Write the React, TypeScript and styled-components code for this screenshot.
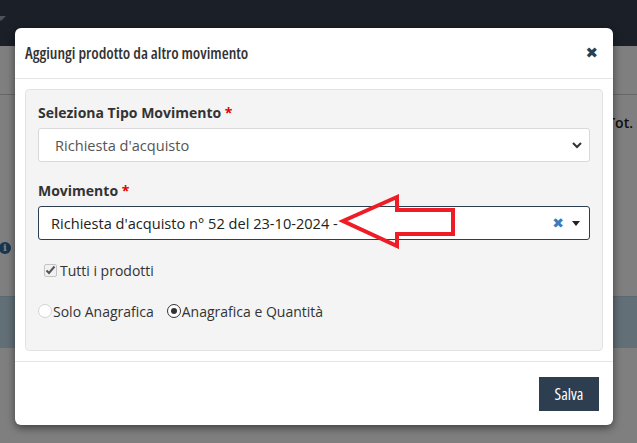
import React from "react";
import styled, { createGlobalStyle } from "styled-components";

const Global = createGlobalStyle`
  html, body { margin: 0; padding: 0; }
  body { width: 637px; height: 443px; overflow: hidden; font-family: "Open Sans", "Noto Sans", sans-serif; }
  * { box-sizing: border-box; }
`;

const Page = styled.div`
  position: relative;
  width: 637px;
  height: 443px;
  background: #ffffff;
  overflow: hidden;
`;

const NavBar = styled.div`
  height: 46px;
  background: #343f50;
  display: flex;
  align-items: flex-start;
  padding-top: 16px;
`;

const NavCaret = styled.span`
  display: block;
  width: 0;
  height: 0;
  margin-left: -4px;
  border-left: 5px solid transparent;
  border-right: 5px solid transparent;
  border-top: 5px solid #9aa3ad;
`;

const PageHeaderRow = styled.div`
  height: 49px;
  border-bottom: 1px solid #cfcfcf;
`;

const PageContent = styled.div`
  display: flex;
  flex-direction: column;
`;

const TotRow = styled.div`
  height: 54px;
  display: flex;
  justify-content: flex-end;
  align-items: center;
  font-size: 14px;
  font-weight: 600;
  color: #222;
  padding-right: 4px;
`;

const InfoRow = styled.div`
  height: 147px;
  display: flex;
  align-items: flex-end;
  padding-bottom: 42px;
`;

const InfoIcon = styled.span`
  width: 12px;
  height: 12px;
  margin-left: -1px;
  border-radius: 50%;
  background: #2d6da3;
  color: #fff;
  font-family: "DejaVu Serif", serif;
  font-weight: 700;
  font-size: 10px;
  line-height: 12px;
  text-align: center;
`;

const InfoBand = styled.div`
  height: 52px;
  background: #c4dfec;
  border-top: 1px solid #b5d3e2;
`;

const Backdrop = styled.div`
  position: absolute;
  inset: 0;
  background: rgba(0, 0, 0, 0.5);
`;

const Modal = styled.div`
  position: absolute;
  left: 15px;
  top: 28px;
  width: 598px;
  height: 397px;
  background: #ffffff;
  border-radius: 6px;
  box-shadow: 0 3px 9px rgba(0, 0, 0, 0.5);
  display: flex;
  flex-direction: column;
`;

const ModalHeader = styled.div`
  height: 51px;
  border-bottom: 1px solid #e5e5e5;
  display: flex;
  align-items: center;
  justify-content: space-between;
  padding: 0 15px 0 10px;
`;

const Title = styled.h4`
  margin: 0;
  font-family: "Open Sans", sans-serif;
  font-size: 16px;
  font-weight: 600;
  font-stretch: 79%;
  color: #333;
`;

const Close = styled.span`
  font-family: "DejaVu Sans", sans-serif;
  font-size: 15px;
  font-weight: 700;
  color: #2c3e50;
  line-height: 1;
`;

const ModalBody = styled.div`
  padding: 10px;
  flex: 0 0 auto;
  border-bottom: 1px solid #e5e5e5;
`;

const Well = styled.div`
  height: 262px;
  background: #f4f4f4;
  border: 1px solid #e3e3e3;
  border-radius: 4px;
  padding: 12px 12px 0 12px;
  display: flex;
  flex-direction: column;
`;

const Label = styled.label`
  display: block;
  height: 21px;
  font-size: 14px;
  font-weight: 700;
  color: #333;
  line-height: 21px;
  margin-bottom: 5px;
`;

const Req = styled.span`
  color: #e60000;
`;

const Select = styled.div`
  height: 34px;
  background: #fff;
  border: 1px solid #d9d9d9;
  border-radius: 3px;
  display: flex;
  align-items: center;
  justify-content: space-between;
  padding: 0 6px 0 16px;
  font-size: 14.6px;
  color: #555;
  margin-bottom: 18px;
`;

const Select2 = styled.div`
  height: 34px;
  background: #fff;
  border: 1px solid #2c3e50;
  border-radius: 3px;
  display: flex;
  align-items: center;
  padding: 0 9px 0 12px;
  font-size: 14.6px;
  color: #222;
  margin-bottom: 19px;
`;

const Select2Text = styled.span`
  flex: 1;
`;

const ClearX = styled.span`
  font-family: "DejaVu Sans", sans-serif;
  font-weight: 700;
  font-size: 14px;
  color: #3a7cc2;
  margin-right: 8px;
`;

const Caret = styled.span`
  width: 0;
  height: 0;
  border-left: 4px solid transparent;
  border-right: 4px solid transparent;
  border-top: 5px solid #222;
`;

const CheckRow = styled.div`
  display: flex;
  align-items: center;
  height: 22px;
  padding-left: 6px;
  font-size: 14px;
  color: #333;
  margin-bottom: 19px;
`;

const CheckBox = styled.span`
  width: 13px;
  height: 13px;
  border: 1px solid #c4c4c4;
  border-radius: 2px;
  background: #f1f1f1;
  display: inline-flex;
  align-items: center;
  justify-content: center;
  margin-right: 3px;
`;

const RadioRow = styled.div`
  display: flex;
  align-items: center;
  height: 22px;
  font-size: 14px;
  color: #333;
`;

const RadioItem = styled.span`
  display: inline-flex;
  align-items: center;
  margin-right: 13px;
`;

const Radio = styled.span<{ $checked?: boolean }>`
  width: 14px;
  height: 14px;
  border-radius: 50%;
  border: 1px solid ${(p) => (p.$checked ? "#333" : "#d4d4d4")};
  background: #fff;
  display: inline-flex;
  align-items: center;
  justify-content: center;
  margin-right: 1px;
  &::after {
    content: "";
    width: 6px;
    height: 6px;
    border-radius: 50%;
    background: ${(p) => (p.$checked ? "#333" : "transparent")};
  }
`;

const Footer = styled.div`
  flex: 1;
  display: flex;
  justify-content: flex-end;
  align-items: flex-start;
  padding: 15px 14px 0 0;
`;

const Button = styled.button`
  height: 34px;
  min-width: 60px;
  padding: 0 13px;
  background: #2c3e50;
  color: #fff;
  border: none;
  border-radius: 0;
  font-family: "Open Sans", sans-serif;
  font-size: 16px;
  font-weight: 400;
  font-stretch: 82%;
`;

const ArrowSvg = styled.svg`
  position: absolute;
  left: 327px;
  top: 169px;
`;

export default function App() {
  return (
    <Page>
      <Global />
      <NavBar>
        <NavCaret />
      </NavBar>
      <PageContent>
        <PageHeaderRow />
        <TotRow>Tot.</TotRow>
        <InfoRow>
          <InfoIcon>i</InfoIcon>
        </InfoRow>
        <InfoBand />
      </PageContent>
      <Backdrop />
      <Modal>
        <ModalHeader>
          <Title>Aggiungi prodotto da altro movimento</Title>
          <Close>✖</Close>
        </ModalHeader>
        <ModalBody>
          <Well>
            <Label>
              Seleziona Tipo Movimento <Req>*</Req>
            </Label>
            <Select>
              <span>Richiesta d'acquisto</span>
              <svg width="12" height="12" viewBox="0 0 12 12">
                <path d="M2 4 L6 8 L10 4" fill="none" stroke="#333" strokeWidth="2" />
              </svg>
            </Select>
            <Label>
              Movimento <Req>*</Req>
            </Label>
            <Select2>
              <Select2Text>Richiesta d'acquisto n° 52 del 23-10-2024 -</Select2Text>
              <ClearX>✖</ClearX>
              <Caret />
            </Select2>
            <CheckRow>
              <CheckBox>
                <svg width="11" height="11" viewBox="0 0 11 11">
                  <path d="M1.5 5.5 L4 8 L9.5 1.5" fill="none" stroke="#555" strokeWidth="2" />
                </svg>
              </CheckBox>
              Tutti i prodotti
            </CheckRow>
            <RadioRow>
              <RadioItem>
                <Radio />
                Solo Anagrafica
              </RadioItem>
              <RadioItem>
                <Radio $checked />
                Anagrafica e Quantità
              </RadioItem>
            </RadioRow>
          </Well>
        </ModalBody>
        <Footer>
          <Button>Salva</Button>
        </Footer>
      </Modal>
      <ArrowSvg width="130" height="80" viewBox="0 0 130 80">
        <path
          d="M16 52 L70 28 L70 41 L126 41 L126 65 L70 65 L70 77 Z"
          fill="none"
          stroke="#ee1c25"
          strokeWidth="4"
          strokeLinejoin="miter"
        />
      </ArrowSvg>
    </Page>
  );
}
